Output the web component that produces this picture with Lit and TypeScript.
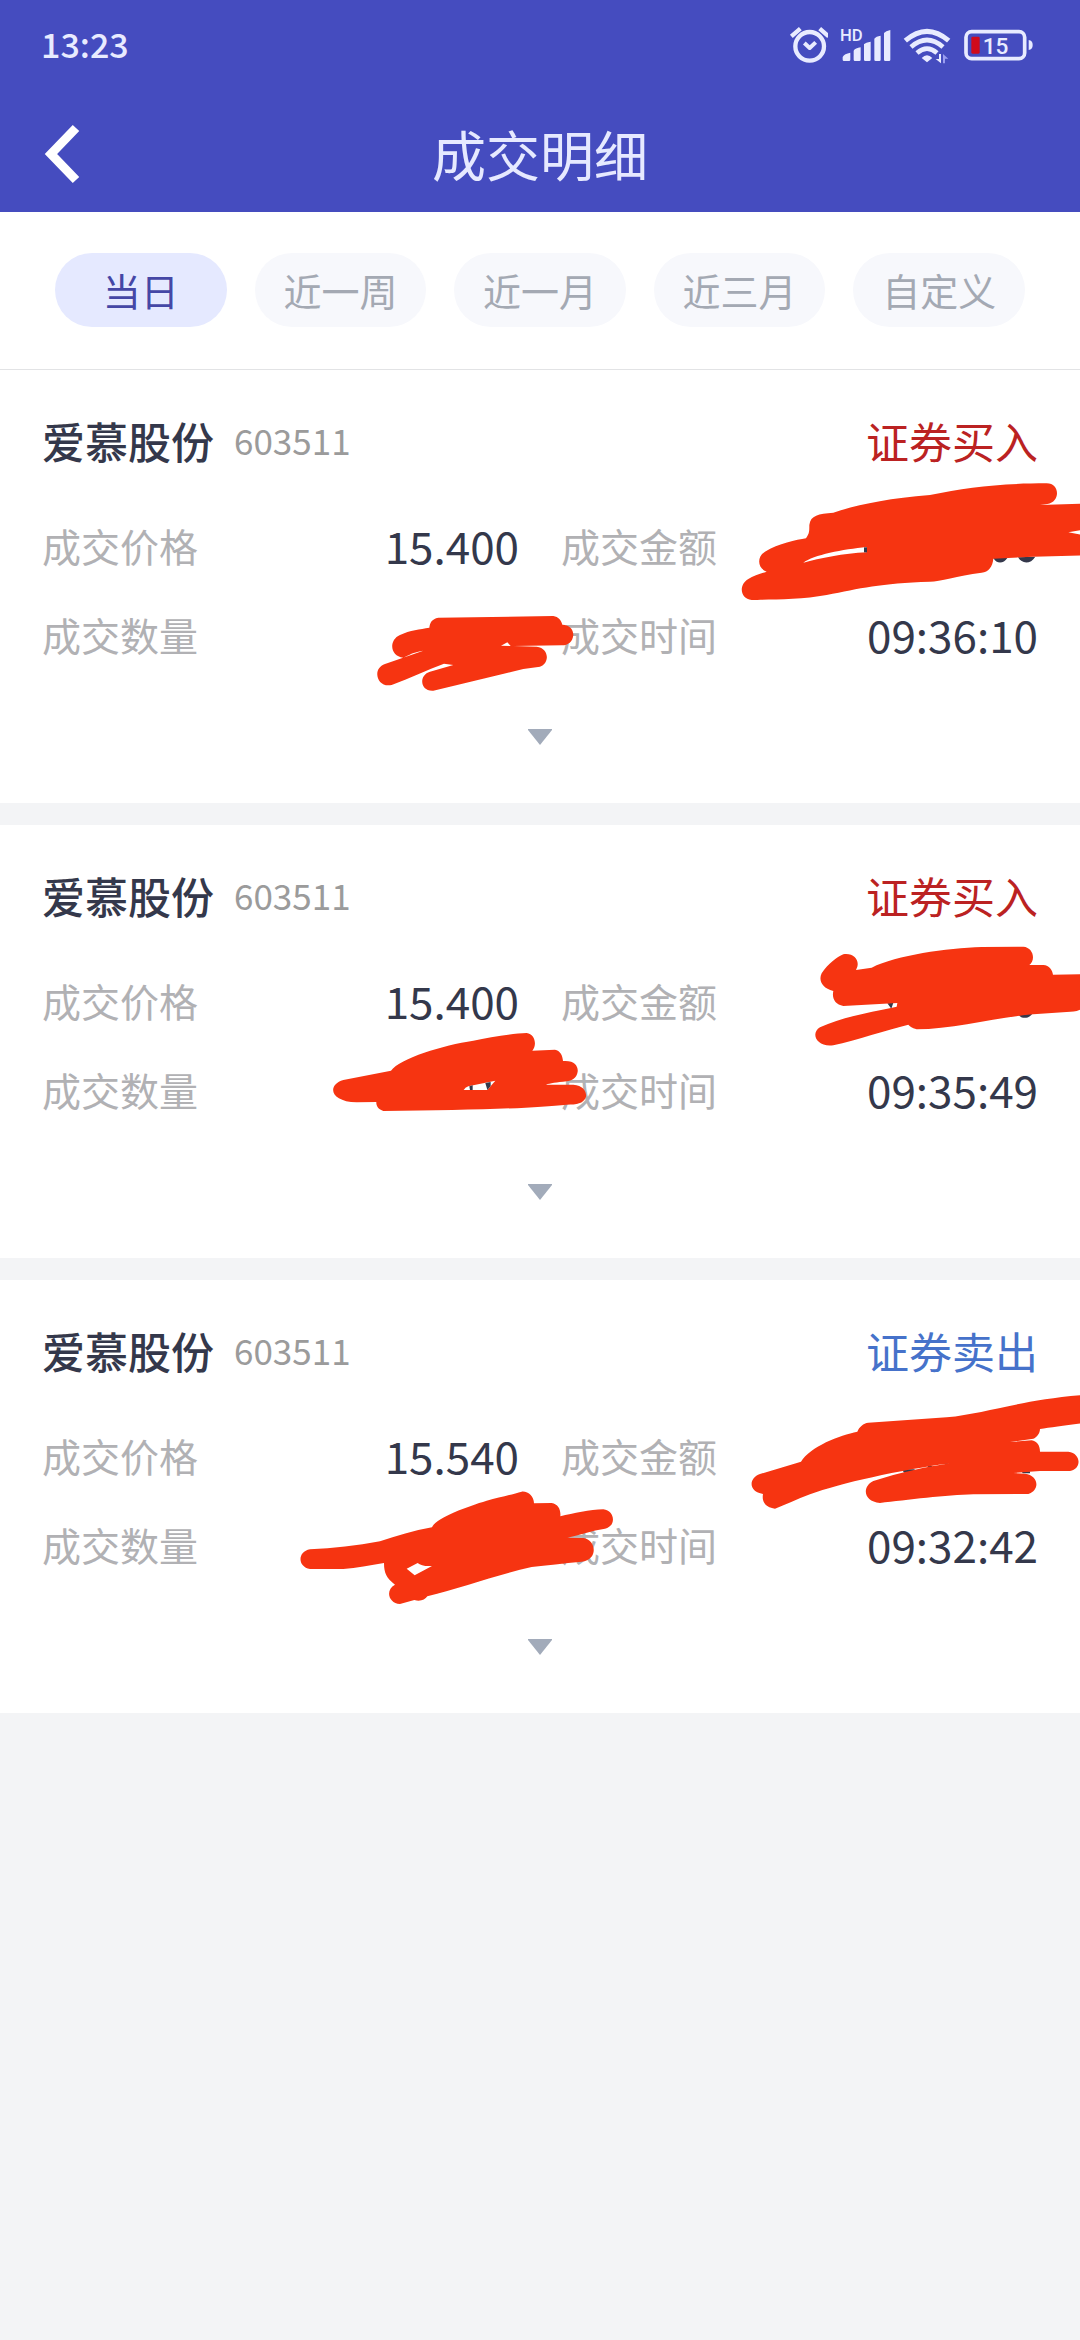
import { LitElement, html, css, svg } from "lit";
import type { SVGTemplateResult } from "lit";
import { customElement, property, state } from "lit/decorators.js";
import { classMap } from "lit/directives/class-map.js";

interface Trade {
  name: string;
  code: string;
  side: "buy" | "sell";
  sideLabel: string;
  price: string;
  time: string;
  marks: SVGTemplateResult;
}

const trades: Trade[] = [
  {
    name: "爱慕股份",
    code: "603511",
    side: "buy",
    sideLabel: "证券买入",
    price: "15.400",
    time: "09:36:10",
    marks: svg`
      <g transform="translate(700 30) scale(0.33333)">
        <path class="ink" d="M880 474C890 492 910 492 922 474ZM954 472C966 493 992 493 1006 470Z"/>
        <path class="pen" d="M1040 250C1080 250 1082 306 1042 312L1020 315L1150 311V389L1105 397L1150 405V466L1000 470L880 476C878 500 865 516 845 518C770 528 720 545 690 545C540 550 480 565 380 585C300 600 200 598 155 600C120 595 115 555 145 537C160 526 185 520 200 515C172 505 170 470 195 455C235 430 290 420 318 415C328 400 328 395 328 375C332 345 355 342 400 338C470 315 560 295 690 285C800 262 900 250 1040 250Z"/>
        <path class="gap" d="M310 488C340 465 430 448 500 441V457C430 460 360 475 310 488Z"/>
        <path class="ink" d="M492 442h9v15h-9z"/>
      </g>
      <g transform="translate(340 130) scale(0.33333)">
        <path class="pen" d="M295 353L640 348C655 350 664 362 667 374C690 374 700 390 700 405C698 425 685 436 665 436L520 438L590 440C630 445 628 492 600 500L550 507L280 572C240 575 235 525 270 515L340 495L312 491C260 510 210 535 155 555C110 565 95 505 135 492L250 452C225 455 205 465 190 473C150 470 145 420 180 405C210 390 240 388 268 383C270 368 275 357 295 353Z"/>
        <path class="gap" d="M483 437L502 427L512 438Z"/>
      </g>`,
  },
  {
    name: "爱慕股份",
    code: "603511",
    side: "buy",
    sideLabel: "证券买入",
    price: "15.400",
    time: "09:35:49",
    marks: svg`
      <g transform="translate(700 25) scale(0.33333)">
        <path class="ink" d="M562 460L574 476L580 458ZM956 496C966 507 988 507 998 490Z"/>
        <path class="pen" d="M845 291L970 290C1000 292 1008 330 988 345H1030C1048 346 1057 360 1059 374L1150 373V475C1130 485 1120 486 1100 486L1000 493C900 500 760 538 650 538C635 534 628 528 625 524C560 540 470 570 400 586C350 593 330 550 360 532C430 500 520 485 590 470L592 459L430 468C405 464 395 445 400 423C365 415 355 390 365 370C385 340 410 322 430 313C460 308 478 330 472 350L468 360L515 353C590 315 740 295 845 291Z"/>
      </g>
      <g transform="translate(300 125) scale(0.33333)">
        <path class="pen" d="M680 249C705 252 712 285 697 302L765 299C780 302 788 315 789 333C825 330 835 350 833 365C830 385 815 392 800 394C770 397 750 400 738 404H820C850 406 860 425 858 440C850 462 830 463 800 464C700 475 500 481 250 483C235 478 228 468 229 456L170 457C90 455 80 405 130 390L273 362C300 325 430 285 520 272C570 262 640 250 680 249Z"/>
        <path class="gap" d="M491 420Q495 412 505 409L586 392L562 420Z"/>
        <path class="ink" d="M508 409L518 406V420H510ZM556 399L572 396V408L562 420Z"/>
      </g>`,
  },
  {
    name: "爱慕股份",
    code: "603511",
    side: "sell",
    sideLabel: "证券卖出",
    price: "15.540",
    time: "09:32:42",
    marks: svg`
      <g transform="translate(700 20) scale(0.33333)">
        <path class="ink" d="M606 508H645L635 518H612ZM683 498H697V506H684ZM732 490H745L738 496ZM965 514H990V520H968Z"/>
        <path class="pen" d="M505 368L740 352C860 340 960 300 1150 285V369C1100 375 1050 382 1020 387C1020 400 1010 413 1000 416L930 426L995 421C1010 424 1020 435 1020 455H1105C1145 460 1145 508 1110 513H1020L940 519L975 521C1015 525 1022 570 985 582L820 583C740 585 620 600 540 609C490 605 485 560 520 543C600 518 680 500 750 490C600 510 420 550 330 583C290 598 255 615 225 626C195 622 185 605 189 582C145 575 145 535 180 522L303 485C330 440 420 405 472 395C478 380 490 370 505 368Z"/>
      </g>
      <g transform="translate(280 140) scale(0.33333)">
        <path class="pen" d="M725 215C745 213 762 230 762 250L815 249C835 252 843 270 841 289C880 280 930 268 970 268C1005 272 1010 318 975 326C935 332 900 345 862 353L910 354C950 360 955 420 905 425C850 430 800 436 755 441C650 465 540 505 442 529C435 540 420 545 403 540L360 552C325 550 315 510 345 494C320 475 312 460 312 429C270 436 230 445 190 447H90C52 440 52 395 90 388C160 385 230 377 300 364C350 348 400 332 456 322C465 295 560 260 620 242C660 232 700 222 725 215Z"/>
        <path class="gap" d="M380 446L413 429Q425 440 456 438L404 466Z"/>
      </g>`,
  },
];

const fontStack = css`Roboto, "Noto Sans CJK SC", sans-serif`;

@customElement("status-bar")
class StatusBar extends LitElement {
  static styles = css`
    :host {
      display: flex;
      align-items: center;
      justify-content: space-between;
      height: 92px;
      padding: 0 47px 0 41px;
      color: #e8ebff;
      font-family: "Noto Sans CJK SC", sans-serif;
    }
    .clock {
      padding-bottom: 4px;
      font-size: 34px;
      line-height: 44px;
      font-weight: 500;
    }
    .icons {
      display: flex;
      gap: 12px;
    }
    .icon {
      display: block;
      height: 42px;
      fill: none;
      stroke: currentColor;
    }
    .solid {
      fill: currentColor;
      stroke: none;
    }
    .dim {
      fill: #9a9df0;
      stroke: none;
    }
    .low {
      fill: #d00a1c;
      stroke: none;
    }
    .label {
      fill: currentColor;
      stroke: none;
      font-family: ${fontStack};
      font-weight: 500;
    }
  `;

  render() {
    return html`
      <time class="clock">13:23</time>
      <div class="icons">
        <svg class="icon" viewBox="77 45 126 126" aria-hidden="true">
          <circle cx="148" cy="109" r="43" stroke-width="13" />
          <path d="M93 79L120 56M178 56L205 79" stroke-width="13" />
          <path d="M132 99L148 114L166 97" stroke-width="12" stroke-linejoin="round" />
        </svg>
        <svg class="icon" viewBox="238 45 153 126" aria-hidden="true">
          <text class="label" x="238" y="94" font-size="50">HD</text>
          <path
            class="solid"
            d="M246 141Q251 131 269 128V149Q269 153 265 153H250Q246 153 246 149ZM279 122Q284 114 300 112V149Q300 153 296 153H283Q279 153 279 149ZM310 103Q315 97 330 95V149Q330 153 326 153H314Q310 153 310 149ZM341 86Q346 79 360 77V149Q360 153 356 153H345Q341 153 341 149ZM370 69Q375 63 389 60V149Q389 153 385 153H374Q370 153 370 149Z"
          />
        </svg>
        <svg class="icon" viewBox="426 45 144 126" aria-hidden="true">
          <path d="M433 92Q498 36 563 92" stroke-width="15" />
          <path d="M450 111Q498 69 546 111" stroke-width="14" />
          <path d="M468 129Q498 103 528 129" stroke-width="14" />
          <path class="solid" d="M482 144Q498 128 514 144L498 157Z" />
          <path class="solid" d="M534 132H540V160L524 147H534Z" />
          <path class="dim" d="M546 160V132L562 146H552V160Z" />
        </svg>
        <svg class="icon" viewBox="608 45 210 126" aria-hidden="true">
          <rect x="617" y="65" width="176" height="81" rx="17" stroke-width="11" />
          <path class="solid" d="M805 90Q817 92 817 105T805 120Z" />
          <rect class="low" x="633" y="80" width="25" height="51" rx="4" />
          <text class="label" x="667" y="131" font-size="68">15</text>
        </svg>
      </div>
    `;
  }
}

@customElement("trade-card")
class TradeCard extends LitElement {
  @property({ attribute: false }) trade!: Trade;

  static styles = css`
    :host {
      display: block;
      position: relative;
      overflow: hidden;
      padding: 40px 42px 0;
      background: #ffffff;
      color: #34384b;
    }
    .head {
      display: flex;
      align-items: center;
      gap: 20px;
      margin-bottom: 45px;
      line-height: 60px;
    }
    .name {
      margin: 0;
      font-size: 43px;
      font-weight: 500;
    }
    .code {
      color: #9b9b9b;
      font-size: 35px;
    }
    .side {
      margin-left: auto;
      font-size: 43px;
    }
    .buy {
      color: #bb2222;
    }
    .sell {
      color: #4672ca;
    }
    .facts {
      display: grid;
      grid-template-columns: 1fr 1fr;
      gap: 29px 42px;
      margin: 0;
    }
    .fact {
      display: flex;
      justify-content: space-between;
      line-height: 60px;
    }
    .term {
      color: #b1b1b4;
      font-size: 39px;
    }
    .value {
      margin: 0;
      font-size: 44px;
    }
    .more {
      box-sizing: border-box;
      display: flex;
      align-items: center;
      justify-content: center;
      width: 100%;
      height: 139px;
      padding: 6px 0 0;
      border: 0;
      background: none;
    }
    .arrow {
      width: 24px;
      height: 16px;
      fill: #a2abba;
    }
    .marks {
      position: absolute;
      inset: 0;
      width: 100%;
      height: 100%;
      pointer-events: none;
    }
    .pen {
      fill: #f63411;
    }
    .gap {
      fill: #ffffff;
    }
    .ink {
      fill: #34384b;
    }
  `;

  private fact(term: string, value = "") {
    return html`
      <div class="fact">
        <dt class="term">${term}</dt>
        <dd class="value">${value}</dd>
      </div>
    `;
  }

  render() {
    const t = this.trade;
    return html`
      <div class="head">
        <h2 class="name">${t.name}</h2>
        <span class="code">${t.code}</span>
        <span class="side ${t.side}">${t.sideLabel}</span>
      </div>
      <dl class="facts">
        ${this.fact("成交价格", t.price)} ${this.fact("成交金额")}
        ${this.fact("成交数量")} ${this.fact("成交时间", t.time)}
      </dl>
      <button class="more" type="button" aria-label="展开">
        <svg class="arrow" viewBox="0 0 24 16"><path d="M0 0H24V1L12 16L0 1Z" /></svg>
      </button>
      <svg class="marks" viewBox="0 0 1080 433" aria-hidden="true">${t.marks}</svg>
    `;
  }
}

@customElement("app-root")
class AppRoot extends LitElement {
  @state() private range = "当日";

  private readonly ranges = ["当日", "近一周", "近一月", "近三月", "自定义"];

  static styles = css`
    :host {
      display: block;
      min-height: 100vh;
      background: #f3f4f6;
      font-family: "Noto Sans CJK SC", sans-serif;
    }
    .top {
      background: #454cbf;
    }
    .nav {
      display: grid;
      grid-template-columns: 1fr auto 1fr;
      align-items: center;
      height: 112px;
      padding: 6px 0 2px;
    }
    .back {
      justify-self: start;
      display: flex;
      align-items: center;
      height: 112px;
      padding: 0 42px;
      border: 0;
      background: none;
    }
    .chevron {
      width: 40px;
      height: 60px;
      fill: none;
      stroke: #ffffff;
      stroke-width: 9;
    }
    .title {
      margin: 0;
      color: #e6e9ff;
      font-size: 54px;
      line-height: 72px;
      font-weight: 400;
    }
    .ranges {
      display: grid;
      grid-template-columns: repeat(5, 1fr);
      gap: 28px;
      padding: 41px 55px 42px;
      border-bottom: 1px solid #e2e3e5;
      background: #ffffff;
    }
    .range {
      height: 74px;
      padding: 0;
      border: 0;
      border-radius: 37px;
      background: #f7f8fc;
      color: #a4a9b3;
      font-family: inherit;
      font-size: 38px;
      line-height: 74px;
    }
    .active {
      background: #e5e9ff;
      color: #4547a6;
    }
    .list {
      display: flex;
      flex-direction: column;
      gap: 22px;
    }
  `;

  render() {
    return html`
      <header class="top">
        <status-bar></status-bar>
        <div class="nav">
          <button class="back" type="button" aria-label="返回">
            <svg class="chevron" viewBox="42 124 40 60">
              <path d="M76 128L51 154L76 180" />
            </svg>
          </button>
          <h1 class="title">成交明细</h1>
        </div>
      </header>
      <nav class="ranges">
        ${this.ranges.map(
          (r) => html`
            <button
              type="button"
              class=${classMap({ range: true, active: r === this.range })}
              aria-pressed=${r === this.range}
              @click=${() => (this.range = r)}
            >
              ${r}
            </button>
          `,
        )}
      </nav>
      <main class="list">
        ${trades.map((t) => html`<trade-card .trade=${t}></trade-card>`)}
      </main>
    `;
  }
}
